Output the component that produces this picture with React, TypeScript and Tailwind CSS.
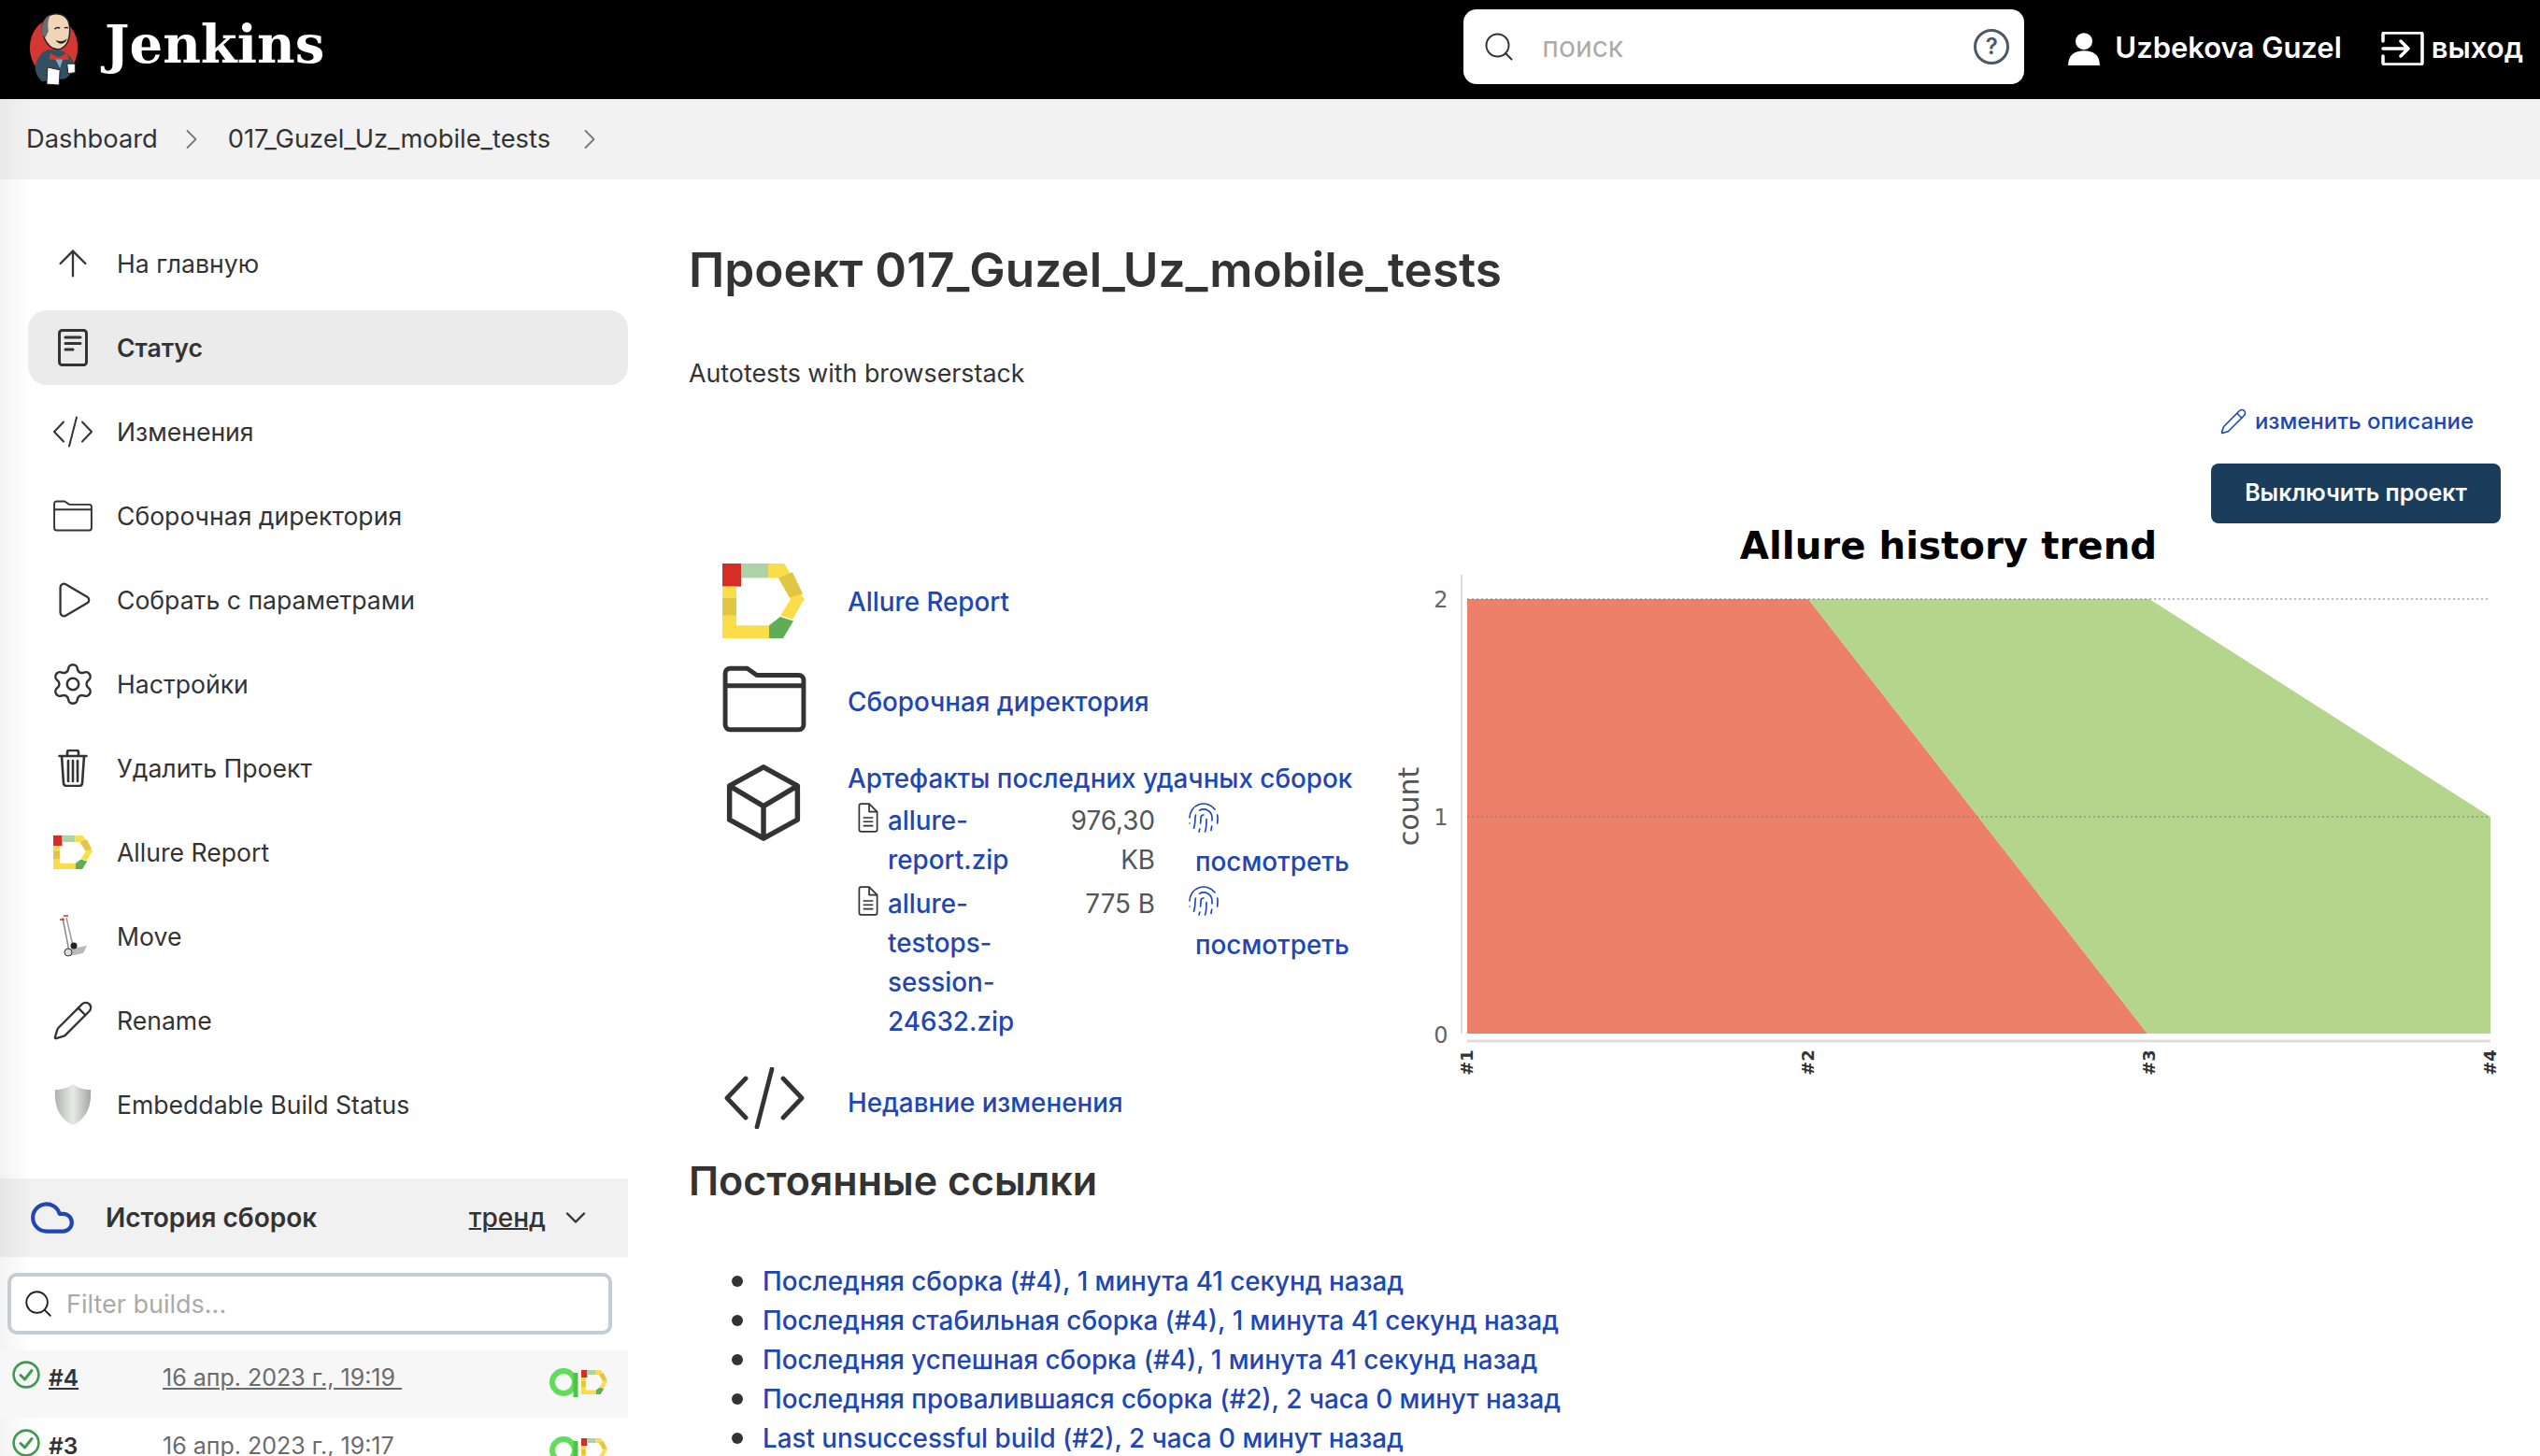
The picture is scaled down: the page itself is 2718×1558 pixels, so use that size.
import { ArrowUp, ChevronDown, ChevronRight, Cloud, Fingerprint, Pencil, Play, Search, Settings } from "lucide-react";

const LINKS = [
  "Последняя сборка (#4), 1 минута 41 секунд назад",
  "Последняя стабильная сборка (#4), 1 минута 41 секунд назад",
  "Последняя успешная сборка (#4), 1 минута 41 секунд назад",
  "Последняя провалившаяся сборка (#2), 2 часа 0 минут назад",
  "Last unsuccessful build (#2), 2 часа 0 минут назад",
];

const BUILDS = [
  { id: "#4", date: "16 апр. 2023 г., 19:19", shade: true },
  { id: "#3", date: "16 апр. 2023 г., 19:17", shade: false },
];

function JenkinsLogo() {
  return (
    <svg viewBox="0 0 60 84" className="h-[80px] w-[57px] shrink-0">
      <ellipse cx="29" cy="40" rx="27" ry="33" fill="#d33833" />
      <path d="M8 64c1-12 7-20 15-22l14 1c8 3 14 9 15 17-1 6-5 12-10 15l-26 3c-4-3-7-8-8-14z" fill="#335061" />
      <path d="M16 22c-2-14 8-21 18-20 9 1 13 8 13 18 0 9-3 18-10 21-8 3-17-3-21-19z" fill="#f0d6b7" stroke="#231f20" strokeWidth="1.5" />
      <path d="M16 26c-3-10 2-20 9-23-3 6-3 12-2 18l-3 7z" fill="#6d6b6d" />
      <path d="M30 19c2-2 4-2 6-1M41 18c1-1 3-1 4 0" stroke="#231f20" strokeWidth="1.5" fill="none" />
      <path d="M31 31c4 3 9 2 13-1-2 6-9 8-13 1z" fill="#231f20" />
      <path d="M25 46l9 5 10-5 2 7-10 1-12-1z" fill="#d33833" />
      <path d="M31 53h8l-3 10z" fill="#81b0c4" />
      <path d="M22 62l14 3-1 17-14-1z" fill="#fff" stroke="#231f20" strokeWidth="1" />
      <path d="M44 58h9v10l-8 1z" fill="#fff" stroke="#231f20" strokeWidth="1" />
    </svg>
  );
}

function AllureMark({ className }: { className: string }) {
  return (
    <svg viewBox="0 0 88 104" className={className} preserveAspectRatio="none">
      <path d="M0 0h20v32H0z" fill="#d42e26" />
      <path d="M20 0h29v20H20z" fill="#aed2a8" />
      <path d="M49 0h17l10 20-17 0-10 0V20z" fill="#fbdd4a" />
      <path d="M60 20l16-0 12 32-14 0z" fill="#fbdd4a" />
      <path d="M60 20l15-8 11 30-14 5z" fill="#e1c544" />
      <path d="M74 48h14L75 78l-13-6z" fill="#fbdd4a" />
      <path d="M0 32h15v72H0z" fill="#fbdd4a" />
      <path d="M0 48h15v24H0z" fill="#e1c544" />
      <path d="M0 86h50v18H0z" fill="#fbdd4a" />
      <path d="M50 86l12-12 14 6-11 24H50z" fill="#5fae57" />
    </svg>
  );
}

function HandTruck() {
  return (
    <svg viewBox="0 0 32 46" className="h-[46px] w-[32px]">
      <path d="M5 3l7 36" stroke="#8a8a8a" strokeWidth="1.5" fill="none" />
      <path d="M9 3l7 30" stroke="#9a9a9a" strokeWidth="1.5" fill="none" />
      <path d="M2 5h5M6 1h5" stroke="#c0392b" strokeWidth="1.5" />
      <path d="M14 36l17-3-4 8-15 3z" fill="#b9b9b9" />
      <circle cx="17" cy="33" r="3.5" fill="#222" />
      <circle cx="11" cy="40" r="4" fill="#ddd" stroke="#333" strokeWidth="1" />
    </svg>
  );
}

function ShieldMark() {
  return (
    <svg viewBox="0 0 40 44" className="h-[44px] w-[40px]">
      <defs>
        <linearGradient id="shield-grad" x1="0" x2="1" y1="0" y2="0">
          <stop offset="0" stopColor="#aeb3ad" />
          <stop offset="0.5" stopColor="#e8eae6" />
          <stop offset="1" stopColor="#a2a6a1" />
        </linearGradient>
      </defs>
      <path d="M20 0c5 4 12 6 19 6 1 16-3 30-19 38C4 36 0 22 1 6c7 0 14-2 19-6z" fill="url(#shield-grad)" />
    </svg>
  );
}

function StatusIcon() {
  return (
    <svg viewBox="0 0 32 40" className="h-[40px] w-[32px]" fill="none" stroke="#333" strokeWidth="3" strokeLinejoin="round" strokeLinecap="round">
      <rect x="1.5" y="1.5" width="29" height="37" rx="3" />
      <path d="M8 9h16M8 15.5h16M8 22h8" />
    </svg>
  );
}

function TrashIcon() {
  return (
    <svg viewBox="0 0 32 40" className="h-[40px] w-[32px]" fill="none" stroke="#333" strokeWidth="2.6" strokeLinejoin="round" strokeLinecap="round">
      <path d="M1.5 7h29M10 7V3a2 2 0 012-2h8a2 2 0 012 2v4M4 7l2 29a3 3 0 003 3h14a3 3 0 003-3l2-29M11 12v22M16 12v22M21 12v22" />
    </svg>
  );
}

function CodeIcon({ className, width }: { className: string; width: number }) {
  return (
    <svg viewBox="0 0 44 33" className={className} fill="none" stroke="#333" strokeWidth={width} strokeLinecap="round" strokeLinejoin="round">
      <path d="M12 6L2 16.5 12 27M32 6l10 10.5L32 27M26 1l-8 31" />
    </svg>
  );
}

function FolderIcon({ className, width }: { className: string; width: number }) {
  return (
    <svg viewBox="0 0 44 35" className={className} fill="none" stroke="#333" strokeWidth={width} strokeLinejoin="round">
      <path d="M1.5 4a2.5 2.5 0 012.5-2.5h9l5 3.5h22a2.5 2.5 0 012.5 2.5V31a2.5 2.5 0 01-2.5 2.5H4A2.5 2.5 0 011.5 31z" />
      <path d="M1.5 10.5h41" />
    </svg>
  );
}

function FileIcon() {
  return (
    <svg viewBox="0 0 22 30" className="h-[32px] w-[24px]" fill="none" stroke="#333" strokeWidth="1.6" strokeLinejoin="round">
      <path d="M2 3a2 2 0 012-2h8l8 8v18a2 2 0 01-2 2H4a2 2 0 01-2-2z" />
      <path d="M12 1v8h8M6 15h10M6 19h10M6 23h10" />
    </svg>
  );
}

function BuildBadge() {
  return (
    <span className="flex items-center">
      <svg viewBox="0 0 34 32" className="h-[32px] w-[34px]" fill="none">
        <circle cx="15" cy="16" r="12" stroke="#62dd5a" strokeWidth="6" />
        <path d="M28 6v26" stroke="#4fc24a" strokeWidth="5" />
      </svg>
      <AllureMark className="h-[26px] w-[28px]" />
    </span>
  );
}

function SideItem({ icon, label, active }: { icon: React.ReactNode; label: string; active?: boolean }) {
  return (
    <div className={`mx-[30px] flex h-[80px] w-[642px] items-center rounded-[20px] ${active ? "bg-[#ebebeb] font-semibold" : ""}`}>
      <span className="flex w-[95px] shrink-0 justify-center">{icon}</span>
      <span className="pt-[2px] text-[26.6px] text-[#333]">{label}</span>
    </div>
  );
}

export default function App() {
  return (
    <div className="h-[1558px] w-[2718px] overflow-hidden bg-white font-[Inter,sans-serif] text-[#333]">
      {/* header */}
      <header className="flex h-[106px] items-center bg-black pl-[30px] pr-[18px] text-white">
        <JenkinsLogo />
        <span className="mb-[12px] ml-[25px] font-['DejaVu_Serif',serif] text-[56px] font-bold">Jenkins</span>
        <div className="mb-[6px] ml-auto flex h-[80px] w-[600px] shrink-0 items-center rounded-[14px] bg-white pl-[20px] pr-[16px]">
          <Search className="h-[36px] w-[36px] text-[#333]" strokeWidth={1.3} />
          <span className="ml-[28px] flex-1 text-[30px] text-[#aaa]">поиск</span>
          <span className="flex h-[38px] w-[38px] items-center justify-center rounded-full border-[3px] border-[#4f5866] text-[24px] font-semibold text-[#4f5866]">?</span>
        </div>
        <svg viewBox="0 0 32 32" className="mb-[3px] ml-[46px] h-[36px] w-[36px] shrink-0" fill="#fff">
          <circle cx="16" cy="9" r="8" />
          <path d="M1 32c0-10 6-14 15-14s15 4 15 14z" />
        </svg>
        <span className="mb-[3px] ml-[15px] text-[31px] font-semibold whitespace-nowrap">Uzbekova Guzel</span>
        <svg viewBox="0 0 46 36" className="mb-[3px] ml-[42px] h-[36px] w-[46px] shrink-0" fill="none" stroke="#fff" strokeWidth="3.5" strokeLinejoin="round" strokeLinecap="round">
          <path d="M2 10V3a2 2 0 012-2h38a2 2 0 012 2v30a2 2 0 01-2 2H4a2 2 0 01-2-2v-7M2 18h26M21 10l8 8-8 8" />
        </svg>
        <span className="mb-[3px] ml-[8px] text-[31px] font-semibold">выход</span>
      </header>

      {/* breadcrumbs */}
      <nav className="flex h-[86px] items-center bg-[linear-gradient(90deg,#e9e9e9,#f2f2f2_34px)] pl-[28px] text-[27.3px]">
        <span>Dashboard</span>
        <ChevronRight className="ml-[18px] h-[36px] w-[36px] text-[#777]" strokeWidth={1.2} />
        <span className="ml-[21px]">017_Guzel_Uz_mobile_tests</span>
        <ChevronRight className="ml-[24px] h-[36px] w-[36px] text-[#777]" strokeWidth={1.2} />
      </nav>

      <div className="flex">
        {/* sidebar */}
        <aside className="h-[1366px] w-[672px] shrink-0 bg-[linear-gradient(90deg,#f3f3f3,#fff_34px)] pt-[50px]">
          <div className="flex flex-col gap-[10px]">
            <SideItem icon={<ArrowUp className="h-[46px] w-[46px] text-[#333]" strokeWidth={1.2} />} label="На главную" />
            <SideItem active icon={<StatusIcon />} label="Статус" />
            <SideItem icon={<CodeIcon className="h-[34px] w-[44px]" width={2} />} label="Изменения" />
            <SideItem icon={<FolderIcon className="h-[34px] w-[44px]" width={2} />} label="Сборочная директория" />
            <SideItem icon={<Play className="h-[46px] w-[46px] text-[#333]" strokeWidth={1.2} />} label="Собрать с параметрами" />
            <SideItem icon={<Settings className="h-[50px] w-[50px] text-[#333]" strokeWidth={1.2} />} label="Настройки" />
            <SideItem icon={<TrashIcon />} label="Удалить Проект" />
            <SideItem icon={<AllureMark className="h-[36px] w-[42px]" />} label="Allure Report" />
            <SideItem icon={<HandTruck />} label="Move" />
            <SideItem icon={<Pencil className="h-[46px] w-[46px] text-[#333]" strokeWidth={1.2} />} label="Rename" />
            <SideItem icon={<ShieldMark />} label="Embeddable Build Status" />
          </div>

          {/* build history */}
          <div className="mt-[39px] flex h-[84px] items-center bg-[linear-gradient(90deg,#e6e6e6,#f1f1f1_34px)] pl-[30px] pr-[38px]">
            <Cloud className="h-[50px] w-[52px] text-[#1e46b4]" strokeWidth={2} />
            <span className="ml-[31px] flex-1 text-[28px] font-semibold">История сборок</span>
            <span className="text-[28px] font-medium underline decoration-2">тренд</span>
            <ChevronDown className="ml-[14px] h-[36px] w-[36px]" strokeWidth={1.6} />
          </div>
          <div className="mx-[8px] mt-[17px] flex h-[66px] w-[647px] items-center rounded-[10px] border-4 border-[#c3cdd3] bg-white pl-[12px]">
            <Search className="h-[34px] w-[34px] text-[#222]" strokeWidth={1.3} />
            <span className="ml-[13px] pt-[2px] text-[27px] text-[#aaa]">Filter builds...</span>
          </div>
          <div className="mt-[17px]">
            {BUILDS.map((b) => (
              <div key={b.id} className={`flex h-[73px] pl-[13px] pr-[22px] pt-[11px] ${b.shade ? "bg-[#f7f7f7]" : ""}`}>
                <svg viewBox="0 0 30 30" className="h-[30px] w-[30px] shrink-0" fill="none" stroke="#3f9a4f" strokeWidth="2.6" strokeLinecap="round" strokeLinejoin="round">
                  <circle cx="15" cy="15" r="13.4" />
                  <path d="M9 15.5l4.5 4.5L21 10.5" strokeWidth="3" />
                </svg>
                <span className="ml-[9px] w-[122px] text-[24.5px] font-semibold underline">{b.id}</span>
                <span className="flex-1 text-[25px] text-[#6b6b6b] underline whitespace-pre">{b.date} </span>
                <span className="pt-[7px]"><BuildBadge /></span>
              </div>
            ))}
          </div>
        </aside>

        {/* main */}
        <main className="w-[2046px] pl-[65px] pr-[42px] pt-[67px]">
          <h1 className="text-[51.3px] leading-[58px] font-semibold">Проект 017_Guzel_Uz_mobile_tests</h1>
          <p className="mt-[64px] text-[26.8px] leading-[36px]">Autotests with browserstack</p>
          <div className="mt-[16px] flex items-center justify-end pr-[29px] text-[24px] font-medium text-[#1e46b4]">
            <Pencil className="mr-[8px] h-[30px] w-[30px]" strokeWidth={1.3} />
            изменить описание
          </div>
          <div className="mt-[27px] flex justify-end">
            <button className="h-[64px] w-[310px] rounded-[8px] bg-[#1b3d5c] text-[25px] font-semibold text-white">Выключить проект</button>
          </div>

          <div className="flex">
            <div className="w-[743px] shrink-0 pl-[36px] pt-[45px]">
              <div className="flex h-[80px] items-center">
                <AllureMark className="-mt-[4px] h-[80px] w-[88px] shrink-0" />
                <a className="ml-[46px] text-[27.8px] font-medium text-[#1e46b4]">Allure Report</a>
              </div>
              <div className="mt-[27px] flex h-[72px] items-center">
                <FolderIcon className="h-[72px] w-[90px] shrink-0" width={2.4} />
                <a className="ml-[44px] pt-[8px] text-[27.8px] font-medium text-[#1e46b4]">Сборочная директория</a>
              </div>
              <div className="mt-[33px] flex">
                <svg viewBox="0 0 44 46" className="ml-[4px] h-[84px] w-[80px] shrink-0" fill="none" stroke="#333" strokeWidth="3" strokeLinejoin="round">
                  <path d="M22 2l20 11v20L22 44 2 33V13zM2 13l20 12 20-12M22 25v19" />
                </svg>
                <div className="-mt-[5px] ml-[50px]">
                  <a className="block text-[27.8px] leading-[42px] font-medium whitespace-nowrap text-[#1e46b4]">Артефакты последних удачных сборок</a>
                  <div className="mt-[3px] grid grid-cols-[43px_164px_122px_1fr] gap-y-[3px] text-[27.8px] leading-[42px]">
                    <span className="pl-[10px] pt-[2px]"><FileIcon /></span>
                    <a className="font-medium text-[#1e46b4]">allure-<br />report.zip</a>
                    <span className="text-right text-[#555]">976,30<br />KB</span>
                    <a className="pl-[43px] font-medium text-[#1e46b4]">
                      <Fingerprint className="-ml-[9px] h-[36px] w-[36px]" strokeWidth={1.1} />
                      <span className="block pt-[8px]">посмотреть</span>
                    </a>
                    <span className="pl-[10px] pt-[2px]"><FileIcon /></span>
                    <a className="font-medium text-[#1e46b4]">allure-<br />testops-<br />session-<br />24632.zip</a>
                    <span className="text-right text-[#555]">775 B</span>
                    <a className="pl-[43px] font-medium text-[#1e46b4]">
                      <Fingerprint className="-ml-[9px] h-[36px] w-[36px]" strokeWidth={1.1} />
                      <span className="block pt-[8px]">посмотреть</span>
                    </a>
                  </div>
                </div>
              </div>
              <div className="mt-[28px] flex h-[66px] items-center">
                <CodeIcon className="h-[66px] w-[90px] shrink-0" width={2.4} />
                <a className="ml-[44px] pt-[12px] text-[27.8px] font-medium text-[#1e46b4]">Недавние изменения</a>
              </div>
            </div>

            {/* trend chart */}
            <svg viewBox="0 0 1200 600" className="h-[600px] w-[1200px] shrink-0">
              <text x="605" y="38" textAnchor="middle" fontFamily="DejaVu Sans" fontWeight="700" fontSize="40.3" fill="#000">Allure history trend</text>
              <path d="M84 55V546" stroke="#ddd" strokeWidth="2" />
              <path d="M90 554H1185" stroke="#ddd" strokeWidth="3" />
              <path d="M90 81H455L818 546H90z" fill="#ec806b" />
              <path d="M455 81H820L1185 314V546H818z" fill="#b4d68c" />
              <path d="M90 81H1185M90 314H1185" stroke="#777" strokeOpacity="0.5" strokeWidth="2" strokeDasharray="2 3" />
              <g fontFamily="DejaVu Sans" fontSize="24" fill="#666">
                <text x="62" y="90" textAnchor="middle">2</text>
                <text x="62" y="323" textAnchor="middle">1</text>
                <text x="62" y="556" textAnchor="middle">0</text>
              </g>
              <text transform="translate(38 303) rotate(-90)" textAnchor="middle" fontFamily="DejaVu Sans" fontSize="30" fill="#555">count</text>
              <g fontFamily="DejaVu Sans" fontWeight="700" fontSize="18" fill="#333" textAnchor="middle">
                <text transform="translate(96 577) rotate(-90)">#1</text>
                <text transform="translate(461 577) rotate(-90)">#2</text>
                <text transform="translate(826 577) rotate(-90)">#3</text>
                <text transform="translate(1191 577) rotate(-90)">#4</text>
              </g>
            </svg>
          </div>

          <h2 className="mt-[29px] text-[43px] leading-[52px] font-semibold">Постоянные ссылки</h2>
          <ul className="ml-[46px] mt-[61px] flex flex-col text-[27.8px] leading-[42px] font-medium">
            {LINKS.map((l) => (
              <li key={l} className="flex items-center gap-[21px] text-[#1e46b4]">
                <span className="h-[12px] w-[12px] rounded-full bg-[#333]" />
                {l}
              </li>
            ))}
          </ul>
        </main>
      </div>
    </div>
  );
}
